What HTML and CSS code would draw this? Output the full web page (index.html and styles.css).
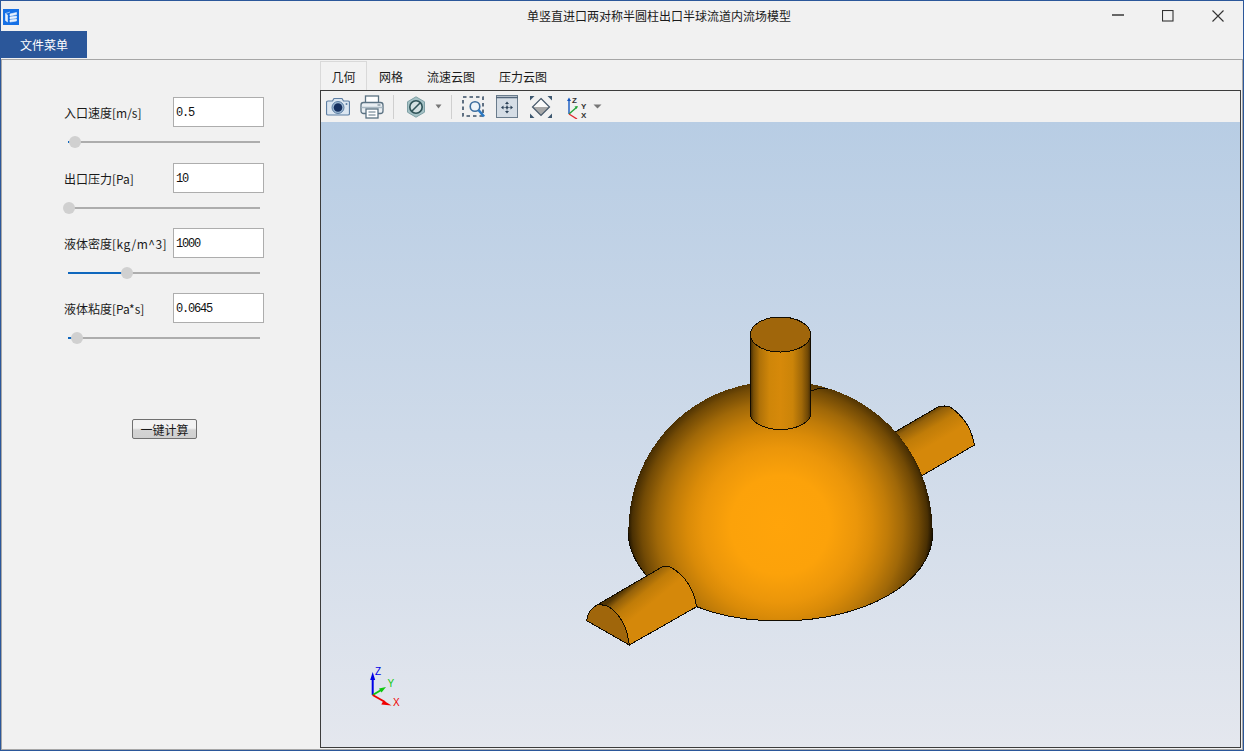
FILE: index.html
```html
<!DOCTYPE html>
<html lang="zh-CN">
<head>
<meta charset="utf-8">
<title>单竖直进口两对称半圆柱出口半球流道内流场模型</title>
<link rel="stylesheet" href="styles.css">
</head>
<body>
<div class="window">
  <header class="titlebar">
    <svg class="app-icon" viewBox="0 0 16 16"><rect width="16" height="16" fill="#1570e6"/><path d="M2.500 4.500L7 3M2.500 4.500v7l2 1.500V6zM7 5l6.500-1.500v2L7 7zM7 8l6.500-1v2L7 10zM7 11l6.500-1v2L7 13z" fill="#e8f1fd" stroke="#e8f1fd" stroke-width=".6"/></svg>
    <div class="title">单竖直进口两对称半圆柱出口半球流道内流场模型</div>
    <div class="controls">
      <div class="ctl"><svg width="12" height="12" viewBox="0 0 12 12"><path d="M0 5h12" stroke="#666" stroke-width="2"/></svg></div>
      <div class="ctl"><svg width="12" height="12" viewBox="0 0 12 12"><rect x=".5" y=".5" width="10.500" height="10.500" fill="none" stroke="#333" stroke-width="1.100"/></svg></div>
      <div class="ctl"><svg width="12" height="12" viewBox="0 0 12 12"><path d="M.5 .5l11 11M11.500 .5l-11 11" stroke="#333" stroke-width="1.100"/></svg></div>
    </div>
  </header>
  <nav class="menubar"><div class="menu-item">文件菜单</div></nav>
  <main class="main">
    <aside class="panel">
      <div class="group">
        <div class="row"><label class="label">入口速度[m/s]</label><input class="field" value="0.5"></div>
        <div class="slider"><div class="fill" style="width:7px"></div><div class="knob" style="left:7px"></div></div>
      </div>
      <div class="group">
        <div class="row"><label class="label">出口压力[Pa]</label><input class="field" value="10"></div>
        <div class="slider"><div class="fill" style="width:1px"></div><div class="knob" style="left:1px"></div></div>
      </div>
      <div class="group">
        <div class="row"><label class="label">液体密度<span class="unit-wide">[kg/m^3]</span></label><input class="field" value="1000"></div>
        <div class="slider"><div class="fill" style="width:59px"></div><div class="knob" style="left:59px"></div></div>
      </div>
      <div class="group">
        <div class="row"><label class="label">液体粘度[Pa*s]</label><input class="field" value="0.0645"></div>
        <div class="slider"><div class="fill" style="width:9px"></div><div class="knob" style="left:9px"></div></div>
      </div>
      <button class="run">一键计算</button>
    </aside>
    <section class="content">
      <div class="tabs">
        <div class="tab active">几何</div>
        <div class="tab">网格</div>
        <div class="tab">流速云图</div>
        <div class="tab">压力云图</div>
      </div>
      <div class="viewer">
        <div class="toolbar">
          <div class="tool"><svg width="24" height="20" viewBox="0 0 24 20"><path d="M2 4h4.500l1.500-2.500h8L17.500 4H22a1.500 1.500 0 0 1 1.500 1.500v11A1.500 1.500 0 0 1 22 18H2a1.500 1.500 0 0 1-1.500-1.500v-11A1.500 1.500 0 0 1 2 4z" fill="#dbe6f1" stroke="#5d7ea3" stroke-width="1.200"/><circle cx="12" cy="10.500" r="6" fill="#9db8d3" stroke="#5d7ea3"/><circle cx="12" cy="10.500" r="4.300" fill="#16305f"/><circle cx="20.500" cy="7" r="1" fill="#5d7ea3"/></svg></div>
          <div class="tool"><svg width="24" height="24" viewBox="0 0 24 24"><rect x="5.500" y="1" width="13" height="7" fill="#fff" stroke="#5b7282" stroke-width="1.300"/><rect x="1" y="7.500" width="22" height="11" rx="2.500" fill="#e9eef2" stroke="#5b7282" stroke-width="1.300"/><path d="M1.500 12.500h21" stroke="#a9b8c3" stroke-width="1.500"/><rect x="6" y="14" width="12" height="9" fill="#fff" stroke="#5b7282" stroke-width="1.300"/><path d="M8.500 17h7M8.500 20h7" stroke="#5b7282"/><path d="M17.500 10h3" stroke="#5b7282"/></svg></div>
          <div class="sep"></div>
          <div class="tool-menu">
            <svg width="20" height="22" viewBox="0 0 20 22"><path d="M10 .8l8.500 5v10.400l-8.500 5-8.500-5V5.800z" fill="#a5c2c6" stroke="#7fa0a5"/><circle cx="10" cy="11" r="6.200" fill="#d3e0e2" stroke="#2f5358" stroke-width="1.600"/><path d="M6 15l8-8" stroke="#2f5358" stroke-width="1.600"/></svg>
            <svg class="caret" width="9" height="5" viewBox="0 0 9 5"><path d="M1.500 .5h6L4.500 4.500z" fill="#777"/></svg>
          </div>
          <div class="sep"></div>
          <div class="tool"><svg width="23" height="22" viewBox="0 0 23 22"><rect x="1" y="1" width="20" height="19" fill="none" stroke="#3a4f66" stroke-width="1.600" stroke-dasharray="3.500 3"/><circle cx="13" cy="10.500" r="4.800" fill="#eef4f9" stroke="#3d6e9e" stroke-width="1.600"/><path d="M16.500 14l5.500 6.500" stroke="#2a79c4" stroke-width="2.600"/></svg></div>
          <div class="tool"><svg width="22" height="23" viewBox="0 0 22 23"><rect x=".5" y=".5" width="21" height="22" fill="#d5dde5" stroke="#6a7c8c"/><path d="M0 2.500h22" stroke="#52657a" stroke-width="1.500"/><path d="M11 8v9M6.500 12.500h9" stroke="#7e8d9c"/><circle cx="11" cy="12.500" r="1.300" fill="#2c4258"/><path d="M11 6.500L9 9h4zM11 18.500L9 16h4zM5 12.500l2.500-2v4zM17 12.500l-2.500-2v4z" fill="#2c4258"/></svg></div>
          <div class="tool"><svg width="24" height="24" viewBox="0 0 24 24"><path d="M12 12H3.500L12 3.500 20.500 12z" fill="#fafafa"/><path d="M12 12H3.500L12 20.500 20.500 12z" fill="#a8a8a8"/><path d="M12 3.500l8.500 8.500-8.500 8.500L3.500 12z" fill="none" stroke="#46586a" stroke-width="1.200"/><path d="M1 1h4.500L1 5.500zM23 1h-4.500L23 5.500zM1 23h4.500L1 18.500zM23 23h-4.500L23 18.500z" fill="#3e5870"/></svg></div>
          <div class="tool-menu axes-menu">
            <svg width="22" height="24" viewBox="0 0 22 24"><path d="M3 19V5" stroke="#1457c0" stroke-width="1.400"/><path d="M3 19l8-7" stroke="#22a53a" stroke-width="1.400"/><path d="M3 19l8 5" stroke="#e0282e" stroke-width="1.400"/><path d="M3 2.500L1 6h4z" fill="#1457c0"/><path d="M12 11l-3.500 .5 2 2.500z" fill="#22a53a"/><text x="6" y="8" class="mini">Z</text><text x="15" y="14" class="mini">Y</text><text x="15" y="23" class="mini">X</text></svg>
            <svg class="caret" width="9" height="5" viewBox="0 0 9 5"><path d="M.5 .5h8L4.500 4.500z" fill="#777"/></svg>
          </div>
        </div>
        <svg class="scene" viewBox="321 122 919 625" preserveAspectRatio="none">
          <defs>
            <linearGradient id="bg" x1="0" y1="0" x2="0" y2="1"><stop offset="0" stop-color="#b8cde4"/><stop offset="1" stop-color="#e4e7ee"/></linearGradient>
            <radialGradient id="dome" gradientUnits="userSpaceOnUse" cx="780" cy="525" r="154">
              <stop offset="0" stop-color="#ffa40a"/><stop offset=".32" stop-color="#fca20a"/><stop offset=".5" stop-color="#eb960a"/><stop offset=".6" stop-color="#da8b08"/><stop offset=".7" stop-color="#c17c08"/><stop offset=".8" stop-color="#a06808"/><stop offset=".9" stop-color="#724a05"/><stop offset=".96" stop-color="#4a3003"/><stop offset="1" stop-color="#100a00"/>
            </radialGradient>
            <linearGradient id="cyl" gradientUnits="userSpaceOnUse" x1="750" y1="0" x2="811" y2="0">
              <stop offset="0" stop-color="#3a2503"/><stop offset=".06" stop-color="#7a5006"/><stop offset=".16" stop-color="#b07208"/><stop offset=".32" stop-color="#cf8609"/><stop offset=".5" stop-color="#d6890a"/><stop offset=".7" stop-color="#cb8409"/><stop offset=".85" stop-color="#a06808"/><stop offset=".95" stop-color="#6e4705"/><stop offset="1" stop-color="#3a2503"/>
            </linearGradient>
            <linearGradient id="pipeR" gradientUnits="userSpaceOnUse" x1="917" y1="416" x2="947" y2="467">
              <stop offset="0" stop-color="#4e3304"/><stop offset=".12" stop-color="#94610a"/><stop offset=".3" stop-color="#c07c08"/><stop offset=".55" stop-color="#d5880a"/><stop offset="1" stop-color="#d5880a"/>
            </linearGradient>
            <linearGradient id="pipeL" gradientUnits="userSpaceOnUse" x1="629" y1="585" x2="662" y2="625">
              <stop offset="0" stop-color="#4e3304"/><stop offset=".12" stop-color="#94610a"/><stop offset=".3" stop-color="#c07c08"/><stop offset=".55" stop-color="#d5880a"/><stop offset="1" stop-color="#d5880a"/>
            </linearGradient>
          </defs>
          <rect x="321" y="122" width="919" height="625" fill="url(#bg)"/>
          <g class="model">
            <path d="M895 432L938 407Q945 405 950 407Q970 420 974.500 445L921.500 476Z" fill="url(#pipeR)"/>
            <path d="M938 407Q945 405 950 407Q970 420 974.500 445L921.500 476M895 432L938 407" class="edge"/>
            <path d="M628.300 533C628.300 445 695 381 780 381C865 381 932.700 445 932.700 533C932.700 582 865 621 780 621C695 621 628.300 582 628.300 533Z" fill="url(#dome)"/>
            <path d="M646 575C632 558 628.300 545 628.300 533M932.700 533C932.700 582 865 621 780 621C750 621 720 616 696.700 606.700M811 391Q820 387 828 389" class="edge"/>
            <path d="M750.300 334V415C752 423 765 429.500 780.500 429.500C796 429.500 809 423 810.700 415V334Z" fill="url(#cyl)" class="line"/>
            <ellipse cx="780.500" cy="334.500" rx="30.200" ry="17.500" fill="#a0660b" class="line"/>
            <path d="M597 605L662 567Q668 565 672 568Q692 580 696.700 606.700L629.300 645Z" fill="url(#pipeL)" class="line"/>
            <path d="M586.700 620.700Q588 610 597 605Q604 604 609 607Q626 618 629.300 645Z" fill="#a0660b" class="line"/>
          </g>
          <path d="M372.700 695V677" stroke="#0000e6" stroke-width="2"/>
          <path d="M372.700 672l-2.500 8h5z" fill="#0000e6"/>
          <path d="M372.700 695L382 689.500" stroke="#10c810" stroke-width="2"/>
          <path d="M386 687l-7 1.500 2.500 4z" fill="#10c810"/>
          <path d="M372.700 695L385 702" stroke="#f00000" stroke-width="2"/>
          <path d="M391.500 705.500l-8-5-2.200 4z" fill="#f00000"/>
          <text x="375" y="675" class="axis z">Z</text>
          <text x="387.500" y="687" class="axis y">Y</text>
          <text x="393" y="706" class="axis x">X</text>
        </svg>
      </div>
    </section>
  </main>
</div>
</body>
</html>
```
FILE: styles.css
```css
* { box-sizing: border-box; }
html, body { margin: 0; height: 100%; }
body { background: #f1f1f1; font-family: "Noto Sans CJK SC", "Liberation Sans", sans-serif; font-size: 12px; color: #1a1a1a; overflow: hidden; }
.window { width: 1244px; height: 751px; display: flex; flex-direction: column; border: 1px solid #2b579a; background: #f1f1f1; }
.titlebar { height: 30px; flex: none; display: flex; align-items: center; }
.app-icon { width: 16px; height: 16px; margin: 2px 0 0 2px; flex: none; }
.title { flex: 1; text-align: center; line-height: 30px; padding-left: 206px; }
.controls { display: flex; flex: none; }
.ctl { width: 50px; height: 30px; display: flex; align-items: center; justify-content: center; }
.menubar { height: 28px; flex: none; }
.menu-item { width: 86px; height: 27px; background: #2b579a; color: #fff; text-align: center; line-height: 27px; }
.main { flex: 1; min-height: 0; display: flex; border: 1px solid #a6a6a6; }
.panel { width: 318px; flex: none; padding: 37px 0 0 62px; }
.group { height: 65px; }
.group:first-child { height: 66px; }
.row { display: flex; align-items: center; height: 30px; }
.label { width: 109px; flex: none; white-space: nowrap; }
.unit-wide { letter-spacing: .5px; }
.field { width: 91px; height: 30px; border: 1px solid #adadad; background: #fff; padding: 1px 2px 0; font: 12px "Liberation Mono", monospace; letter-spacing: -1.2px; color: #111; outline: 0; }
.slider { position: relative; width: 192px; height: 2px; margin: 14px 0 0 4px; background: #adadad; }
.fill { height: 2px; background: #0f67bd; }
.knob { position: absolute; top: -5px; width: 12px; height: 12px; margin-left: -6px; border-radius: 50%; background: #d0d0d0; }
.run { display: block; width: 65px; height: 20px; margin: 61px 0 0 68px; padding: 0; border: 1px solid #707070; border-radius: 2px; background: linear-gradient(#f2f2f2, #f2f2f2 45%, #d4d4d4 55%, #d0d0d0); font: 12px "Noto Sans CJK SC", sans-serif; color: #1a1a1a; }
.content { flex: 1; min-width: 0; display: flex; flex-direction: column; padding: 0 1px 1px 0; }
.tabs { height: 30px; flex: none; display: flex; align-items: flex-end; }
.tab { height: 29px; line-height: 31px; padding: 0 12px; }
.tab.active { border: 1px solid #d9d9d9; border-bottom: 0; background: #f2f2f2; width: 47px; padding: 0; text-align: center; line-height: 30px; }
.viewer { flex: 1; min-height: 0; display: flex; flex-direction: column; border: 1px solid #3c3c3c; }
.toolbar { height: 31px; flex: none; display: flex; align-items: center; background: #f1f1f1; }
.tool { width: 34px; display: flex; justify-content: center; align-items: center; }
.tool-menu { display: flex; align-items: center; gap: 8px; padding: 0 4px 0 8px; }
.axes-menu { gap: 5px; }
.sep { width: 1px; height: 24px; margin: 0 4px; background: #cfcfcf; }
.caret { flex: none; }
.mini { font: bold 8px "Liberation Sans", sans-serif; fill: #333; }
.scene { display: block; flex: 1; min-height: 0; width: 100%; }
.model { shape-rendering: crispEdges; }
.edge { fill: none; stroke: #120c01; stroke-width: 1; }
.line { stroke: #120c01; stroke-width: 1; }
.axis { font: 10px "Liberation Sans", sans-serif; }
.axis.z { fill: #0000e6; }
.axis.y { fill: #10c810; }
.axis.x { fill: #f00000; }
```
